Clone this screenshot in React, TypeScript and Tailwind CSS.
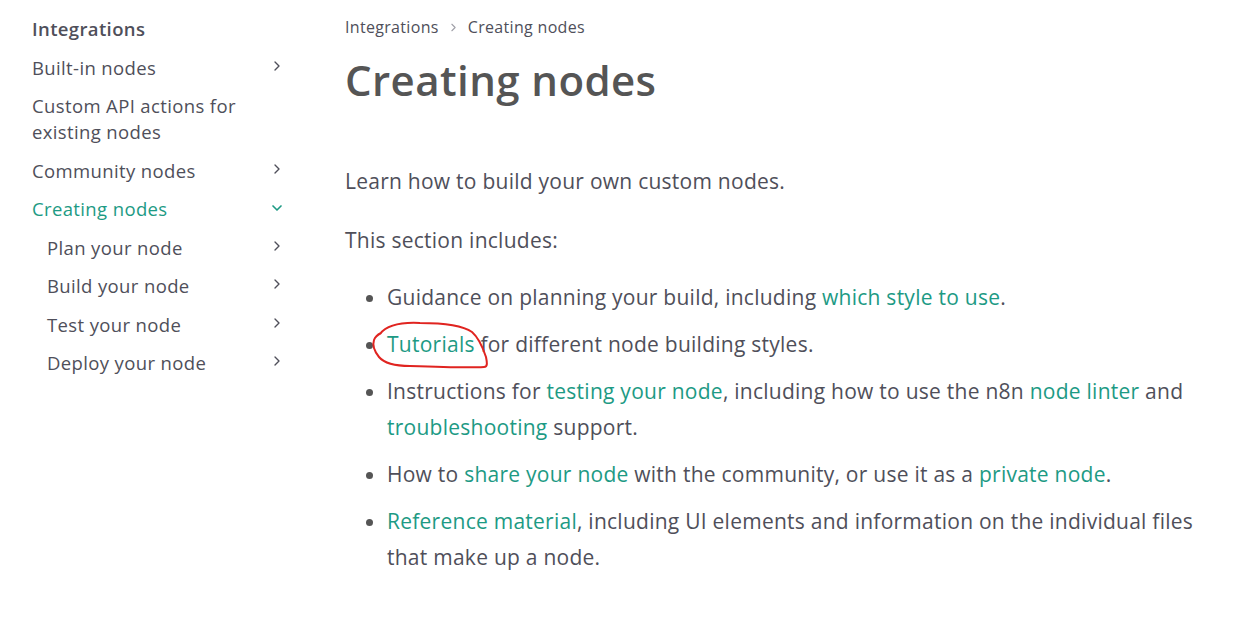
import { ChevronRight, ChevronDown } from 'lucide-react';

const GREEN = 'text-[#1d9a84]';

function NavItem({ label, indent, active, open }: { label: string; indent?: boolean; active?: boolean; open?: boolean }) {
  return (
    <div className={`flex items-start justify-between h-[38.5px] ${indent ? 'pl-[15px]' : ''}`}>
      <span className={`text-[18.5px] leading-[26px] tracking-[0.02em] ${active ? GREEN : 'text-[#4f4f5a]'}`}>{label}</span>
      {open ? (
        <ChevronDown size={16} strokeWidth={2.5} className="mt-[4px] text-[#1d9a84]" />
      ) : (
        <ChevronRight size={16} strokeWidth={2} className="mt-[3px] text-[#4f4f5a]" />
      )}
    </div>
  );
}

const A = ({ children }: { children: React.ReactNode }) => <span className={GREEN}>{children}</span>;

export default function App() {
  return (
    <div className="relative flex w-[1239px] h-[621px] bg-white font-['Open_Sans',sans-serif] overflow-hidden">
      <aside className="w-[345px] shrink-0 pl-[32px] pr-[60px] pt-[16px]">
        <div className="h-[38.5px] text-[18.5px] leading-[26px] tracking-[0.02em] font-semibold text-[#4f4f5a]">Integrations</div>
        <NavItem label="Built-in nodes" />
        <div className="text-[18.5px] leading-[26px] tracking-[0.02em] text-[#4f4f5a] pr-[30px] mb-[12.5px]">
          Custom API actions for existing nodes
        </div>
        <NavItem label="Community nodes" />
        <NavItem label="Creating nodes" active open />
        <NavItem label="Plan your node" indent />
        <NavItem label="Build your node" indent />
        <NavItem label="Test your node" indent />
        <NavItem label="Deploy your node" indent />
      </aside>

      <main className="flex-1 pt-[15px] pr-[30px] text-[#4f4f5a]">
        <div className="flex items-center gap-[8px] text-[16px] leading-[24px] tracking-[0.02em]">
          <span>Integrations</span>
          <ChevronRight size={13} strokeWidth={2} className="text-[#a0a0a8]" />
          <span>Creating nodes</span>
        </div>
        <h1 className="mt-[13px] text-[42px] leading-[56px] tracking-[0.01em] font-semibold text-[#555555]">Creating nodes</h1>
        <p className="mt-[55px] text-[21px] leading-[36px] tracking-[0.012em]">Learn how to build your own custom nodes.</p>
        <p className="mt-[23px] text-[21px] leading-[36px] tracking-[0.012em]">This section includes:</p>
        <ul className="mt-[21px] pl-[42px] text-[21px] leading-[36px] tracking-[0.012em] list-disc marker:text-[#555] flex flex-col gap-[11px]">
          <li>
            Guidance on planning your build, including <A>which style to use</A>.
          </li>
          <li>
            <A>Tutorials</A> for different node building styles.
          </li>
          <li>
            Instructions for <A>testing your node</A>, including how to use the n8n <A>node linter</A> and <A>troubleshooting</A> support.
          </li>
          <li>
            How to <A>share your node</A> with the community, or use it as a <A>private node</A>.
          </li>
          <li>
            <A>Reference material</A>, including UI elements and information on the individual files that make up a node.
          </li>
        </ul>
      </main>

      {/* hand-drawn annotation around "Tutorials" */}
      <svg className="absolute left-[368px] top-[318px] w-[124px] h-[54px] pointer-events-none" viewBox="368 318 124 54" fill="none">
        <path
          d="M380 334 C 386 326, 400 322, 420 323 C 440 323, 462 325, 472 332 C 479 338, 483 348, 486 357 C 487 362, 488 367, 484 367 C 468 368, 438 367, 410 366 C 395 366, 384 363, 379 357 C 375 352, 372 346, 374 340 C 375 337, 377 335, 381 333"
          stroke="#e02420"
          strokeWidth="2"
          strokeLinecap="round"
          strokeLinejoin="round"
        />
      </svg>
    </div>
  );
}
